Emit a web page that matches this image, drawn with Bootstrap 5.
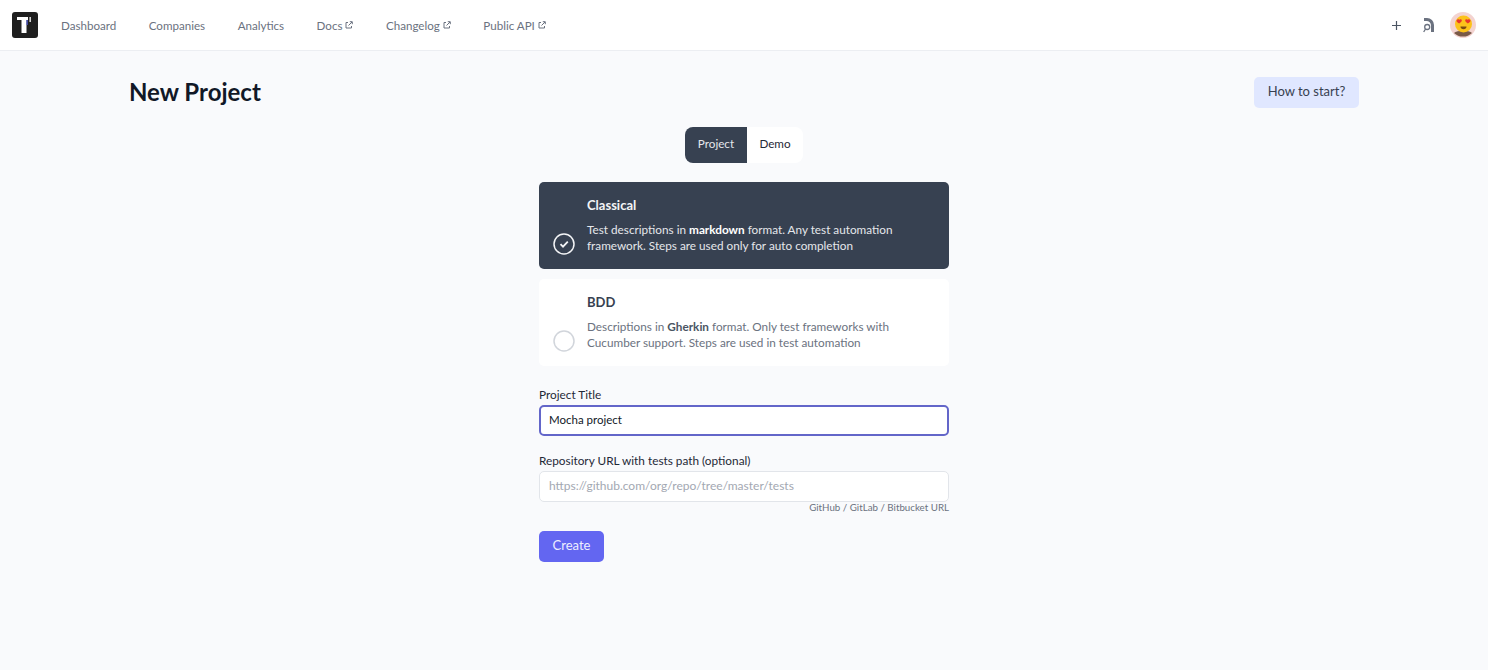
<!DOCTYPE html>
<html lang="en">
<head>
    <meta charset="UTF-8">
    <title>New Project</title>
    <link href="https://cdn.jsdelivr.net/npm/bootstrap@5.3.3/dist/css/bootstrap.min.css" rel="stylesheet">
    <style>
        body { background: #f9fafc; font-family: Lato, "Liberation Sans", sans-serif; color: #111827; font-size: 12px; }
        .topbar { height: 51px; background: #fff; border-bottom: 1px solid #eceef2; padding: 0 12px; }
        .logo-box { width: 26px; height: 26px; }
        .top-links { margin-left: 23px; gap: 32.5px; padding-top: 1px; }
        .top-links a { color: #6b7280; font-size: 11.6px; text-decoration: none; display: flex; align-items: center; gap: 3px; }
        .plus-icon { margin-right: 22px; }
        .feed-icon { margin-right: 16px; }
        .page-wrap { width: 1230px; margin: 0 auto; }
        .page-head { padding-top: 26px; height: 76px; }
        .page-title { font-size: 24px; font-weight: 700; margin: 0; line-height: 30px; color: #111827; }
        .start-btn { background: #e0e7ff; color: #374151; font-size: 13px; width: 105px; height: 31px; border-radius: 5px; border: 0; padding: 0 0 2px; }
        .switcher { width: 118px; height: 36px; background: #fff; border-radius: 8px; overflow: hidden; font-size: 11.7px; }
        .switcher span { display: flex; align-items: center; justify-content: center; color: #1f2937; padding-bottom: 2px; }
        .switcher .on { width: 62px; background: #374151; color: #e5e7eb; }
        .switcher .off { flex: 1; }
        .form-col { width: 410px; margin: 19px auto 0; }
        .kind-card { height: 87px; border-radius: 5px; background: #fff; padding: 14px 12px 0 48px; margin-bottom: 10px; color: #6b7280; font-size: 11.75px; line-height: 16px; position: relative; }
        .kind-card h6 { font-size: 13px; font-weight: 700; line-height: 18px; margin: 0 0 8px; color: #374151; }
        .kind-card b { font-weight: 700; color: #4b5563; }
        .kind-card.on { background: #374151; color: #e5e7eb; }
        .kind-card.on h6 { color: #f3f4f6; }
        .kind-card.on b { color: #fff; }
        .kind-mark { position: absolute; left: 14px; top: 51px; width: 22px; height: 22px; }
        .field-label { font-size: 11.8px; color: #1f2937; line-height: 16px; margin: 1px 0 2px; display: block; }
        .repo-field { margin-top: 17px; }
        .form-control.field-input { height: 31px; font-size: 11.5px; border-radius: 5px; padding: 0 9px 3px; border: 1px solid #e2e5ea; background: #fff; color: #111827; }
        .form-control.field-input::placeholder { color: #a3a8b2; font-size: 12px; }
        .form-control.field-input.active-input { border: 2px solid #6366c9; padding: 0 8px 3px; }
        .field-hint { font-size: 9.75px; color: #6b7280; text-align: right; line-height: 11px; }
        .create-btn { background: #6366f1; color: #eef; width: 65px; height: 31px; border-radius: 5px; border: 0; padding: 0 0 2px; font-size: 13px; margin-top: 18px; }
    </style>
</head>
<body>
    <nav class="topbar d-flex align-items-center justify-content-between">
        <div class="d-flex align-items-center">
            <svg class="logo-box" viewBox="0 0 26 26">
                <rect width="26" height="26" rx="3" fill="#1f1f1f"/>
                <path d="M5 5h11v3h-1.500v13h-5V8H5z" fill="#fff"/>
                <rect x="14.500" y="8" width="1.200" height="5" fill="#4f5bd5"/>
                <rect x="17.500" y="5" width="1.300" height="5" fill="#fff"/>
            </svg>
            <div class="top-links d-flex">
                <a href="#">Dashboard</a>
                <a href="#">Companies</a>
                <a href="#">Analytics</a>
                <a href="#">Docs <svg width="8" height="8" viewBox="0 0 8 8" fill="none" stroke="#6b7280"><path d="M3 1.500H1v5.500h5.500V5M3.500 4.500 7 1M4.800 .7H7.300V3.200"/></svg></a>
                <a href="#">Changelog <svg width="8" height="8" viewBox="0 0 8 8" fill="none" stroke="#6b7280"><path d="M3 1.500H1v5.500h5.500V5M3.500 4.500 7 1M4.800 .7H7.300V3.200"/></svg></a>
                <a href="#">Public API <svg width="8" height="8" viewBox="0 0 8 8" fill="none" stroke="#6b7280"><path d="M3 1.500H1v5.500h5.500V5M3.500 4.500 7 1M4.800 .7H7.300V3.200"/></svg></a>
            </div>
        </div>
        <div class="d-flex align-items-center">
            <svg class="plus-icon" width="9" height="9" viewBox="0 0 9 9" stroke="#4b5563" stroke-width="1.200"><path d="M4.500 0v9M0 4.500h9"/></svg>
            <svg class="feed-icon" width="11" height="15" viewBox="0 0 11 15" fill="none">
                <path d="M1 0h3a7 7 0 0 1 7 7v7H8V7.500A4.500 4.500 0 0 0 3.500 3H1z" fill="#6b7280"/>
                <circle cx="4.200" cy="9" r="2.500" stroke="#6b7280" stroke-width="1.300"/>
                <path d="M2.500 11 .7 14" stroke="#6b7280" stroke-width="1.300"/>
            </svg>
            <svg width="26" height="26" viewBox="0 0 26 26">
                <circle cx="13" cy="13" r="13" fill="#f3d3d0"/>
                <path d="M4 21c3-3 15-3 18 0a13 13 0 0 1-18 0z" fill="#7a5a48"/>
                <circle cx="13.500" cy="12" r="8.500" fill="#fcc21b"/>
                <path d="M6.500 8.500c.8-1.600 2.500-1.600 3-.7.500-.9 2.500-.6 2.300 1-.2 1.100-1.600 2-2.600 2.600-1-.6-2.900-1.500-2.700-2.900z" fill="#e8352a"/>
                <path d="M15.200 8.800c-.2-1.600 1.800-1.900 2.300-1 .5-.9 2.200-.9 3 .7.200 1.400-1.700 2.300-2.700 2.900-1-.6-2.400-1.500-2.600-2.600z" fill="#e8352a"/>
                <path d="M10.500 14.500h6c0 1.800-1.300 2.700-3 2.700s-3-.9-3-2.700z" fill="#7a4a12"/>
            </svg>
        </div>
    </nav>

    <main class="page-wrap">
        <div class="page-head d-flex justify-content-between align-items-start">
            <h1 class="page-title">New Project</h1>
            <button type="button" class="btn start-btn">How to start?</button>
        </div>

        <div class="switcher d-flex mx-auto">
            <span class="on">Project</span>
            <span class="off">Demo</span>
        </div>

        <form class="form-col">
            <div class="kind-card on">
                <h6>Classical</h6>
                <div>Test descriptions in <b>markdown</b> format. Any test automation<br>framework. Steps are used only for auto completion</div>
                <svg class="kind-mark" viewBox="0 0 22 22" fill="none" stroke="#f3f4f6"><circle cx="11" cy="11" r="10" stroke-width="1.500"/><path d="m7.500 11.200 2.500 2.500 4.800-5" stroke-width="1.800"/></svg>
            </div>
            <div class="kind-card">
                <h6>BDD</h6>
                <div>Descriptions in <b>Gherkin</b> format. Only test frameworks with<br>Cucumber support. Steps are used in test automation</div>
                <svg class="kind-mark" viewBox="0 0 22 22" fill="none" stroke="#d1d5db"><circle cx="11" cy="11" r="10" stroke-width="1.500"/></svg>
            </div>

            <div class="mt-3 pt-1">
                <label class="field-label" for="projectTitle">Project Title</label>
                <input id="projectTitle" type="text" class="form-control field-input active-input" value="Mocha project">
            </div>
            <div class="repo-field">
                <label class="field-label" for="repoUrl">Repository URL with tests path (optional)</label>
                <input id="repoUrl" type="text" class="form-control field-input" placeholder="https://github.com/org/repo/tree/master/tests">
                <div class="field-hint">GitHub / GitLab / Bitbucket URL</div>
            </div>
            <button type="button" class="btn create-btn">Create</button>
        </form>
    </main>
    <script src="https://cdn.jsdelivr.net/npm/bootstrap@5.3.3/dist/js/bootstrap.bundle.min.js"></script>
</body>
</html>
